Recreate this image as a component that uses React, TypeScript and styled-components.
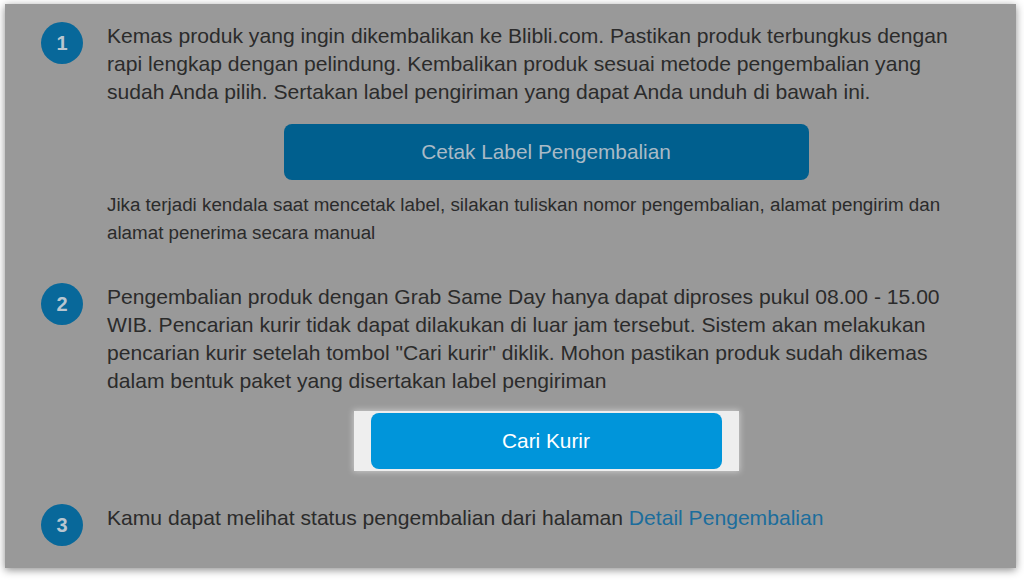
import React from "react";
import styled, { createGlobalStyle } from "styled-components";

const GlobalStyle = createGlobalStyle`
  html, body {
    margin: 0;
    padding: 0;
    background: #ffffff;
  }
  body {
    font-family: "Liberation Sans", Arial, sans-serif;
  }
`;

const Frame = styled.div`
  width: 1024px;
  height: 580px;
  box-sizing: border-box;
  padding: 4px 8px 12px 5px;
  overflow: hidden;
`;

const Panel = styled.div`
  height: 100%;
  box-sizing: border-box;
  background: #999999;
  box-shadow: 0 2px 8px rgba(0, 0, 0, 0.45);
  padding: 18px 31px 22px 36px;
  display: flex;
  flex-direction: column;
`;

const Step = styled.div<{ $gap?: number }>`
  display: grid;
  grid-template-columns: 42px 1fr;
  column-gap: 24px;
  align-items: start;
  margin-top: ${p => p.$gap ?? 0}px;
`;

const Badge = styled.div`
  width: 42px;
  height: 42px;
  border-radius: 50%;
  background: #08689a;
  color: #b9c6d0;
  font-weight: bold;
  font-size: 20px;
  display: flex;
  align-items: center;
  justify-content: center;
`;

const Body = styled.div`
  display: flex;
  flex-direction: column;
`;

const Text = styled.p`
  margin: 0;
  padding-right: 10px;
  font-size: 21.1px;
  line-height: 28px;
  color: #2b2b2b;
`;

const Note = styled.p`
  margin: 11px 0 0;
  font-size: 18.8px;
  line-height: 28px;
  color: #2b2b2b;
`;

const Link = styled.a`
  color: #1c6d9c;
  text-decoration: none;
`;

const Button = styled.button<{ $width: number; $dim?: boolean }>`
  width: ${p => p.$width}px;
  height: 56px;
  border: none;
  border-radius: 8px;
  font-family: inherit;
  font-size: 20.8px;
  background: ${p => (p.$dim ? "#005f8e" : "#0095da")};
  color: ${p => (p.$dim ? "#a9bac6" : "#ffffff")};
  cursor: pointer;
`;

const ButtonRow = styled.div<{ $gap: number }>`
  display: flex;
  justify-content: center;
  margin-top: ${p => p.$gap}px;
`;

const Spotlight = styled.div`
  padding: 2px 17px;
  background: #eeeeee;
  box-shadow: 0 0 6px 1px rgba(255, 255, 255, 0.45);
`;

const App = () => (
  <>
    <GlobalStyle />
    <Frame>
      <Panel>
        <Step>
          <Badge>1</Badge>
          <Body>
            <Text>
              Kemas produk yang ingin dikembalikan ke Blibli.com. Pastikan produk terbungkus dengan
              rapi lengkap dengan pelindung. Kembalikan produk sesuai metode pengembalian yang
              sudah Anda pilih. Sertakan label pengiriman yang dapat Anda unduh di bawah ini.
            </Text>
            <ButtonRow $gap={18}>
              <Button $width={525} $dim>
                Cetak Label Pengembalian
              </Button>
            </ButtonRow>
            <Note>
              Jika terjadi kendala saat mencetak label, silakan tuliskan nomor pengembalian, alamat
              pengirim dan alamat penerima secara manual
            </Note>
          </Body>
        </Step>

        <Step $gap={36}>
          <Badge>2</Badge>
          <Body>
            <Text>
              Pengembalian produk dengan Grab Same Day hanya dapat diproses pukul 08.00 - 15.00
              WIB. Pencarian kurir tidak dapat dilakukan di luar jam tersebut. Sistem akan
              melakukan pencarian kurir setelah tombol "Cari kurir" diklik. Mohon pastikan produk
              sudah dikemas dalam bentuk paket yang disertakan label pengiriman
            </Text>
            <ButtonRow $gap={16}>
              <Spotlight>
                <Button $width={351}>Cari Kurir</Button>
              </Spotlight>
            </ButtonRow>
          </Body>
        </Step>

        <Step $gap={33}>
          <Badge>3</Badge>
          <Body>
            <Text>
              Kamu dapat melihat status pengembalian dari halaman{" "}
              <Link href="#">Detail Pengembalian</Link>
            </Text>
          </Body>
        </Step>
      </Panel>
    </Frame>
  </>
);

export default App;
